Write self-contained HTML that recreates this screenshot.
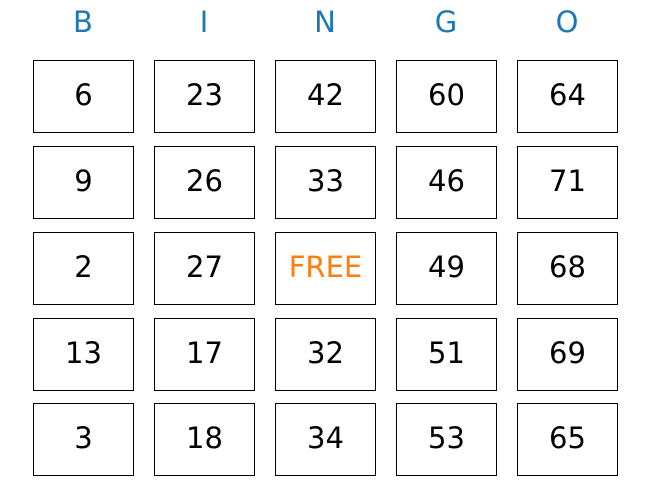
<!DOCTYPE html>
<html><head><style>
body{margin:0;width:650px;height:500px;background:#fff;position:relative;font-family:"DejaVu Sans","Liberation Sans",sans-serif;overflow:hidden}
.h{position:absolute;top:3px;width:100px;text-align:center;font-size:29px;color:#1f77b4;line-height:38px}
.c{position:absolute;width:99px;height:71px;border:1px solid #000;text-align:center;line-height:69px;font-size:29px;color:#000}
.f{color:#ff7f0e}
</style></head><body>
<div class="h" style="left:33px">B</div>
<div class="h" style="left:154px">I</div>
<div class="h" style="left:275px">N</div>
<div class="h" style="left:396px">G</div>
<div class="h" style="left:517px">O</div>

<div class="c" style="left:33px;top:60px">6</div>
<div class="c" style="left:154px;top:60px">23</div>
<div class="c" style="left:275px;top:60px">42</div>
<div class="c" style="left:396px;top:60px">60</div>
<div class="c" style="left:517px;top:60px">64</div>

<div class="c" style="left:33px;top:146px">9</div>
<div class="c" style="left:154px;top:146px">26</div>
<div class="c" style="left:275px;top:146px">33</div>
<div class="c" style="left:396px;top:146px">46</div>
<div class="c" style="left:517px;top:146px">71</div>

<div class="c" style="left:33px;top:232px">2</div>
<div class="c" style="left:154px;top:232px">27</div>
<div class="c f" style="left:275px;top:232px">FREE</div>
<div class="c" style="left:396px;top:232px">49</div>
<div class="c" style="left:517px;top:232px">68</div>

<div class="c" style="left:33px;top:318px">13</div>
<div class="c" style="left:154px;top:318px">17</div>
<div class="c" style="left:275px;top:318px">32</div>
<div class="c" style="left:396px;top:318px">51</div>
<div class="c" style="left:517px;top:318px">69</div>

<div class="c" style="left:33px;top:403px">3</div>
<div class="c" style="left:154px;top:403px">18</div>
<div class="c" style="left:275px;top:403px">34</div>
<div class="c" style="left:396px;top:403px">53</div>
<div class="c" style="left:517px;top:403px">65</div>
</body></html>
